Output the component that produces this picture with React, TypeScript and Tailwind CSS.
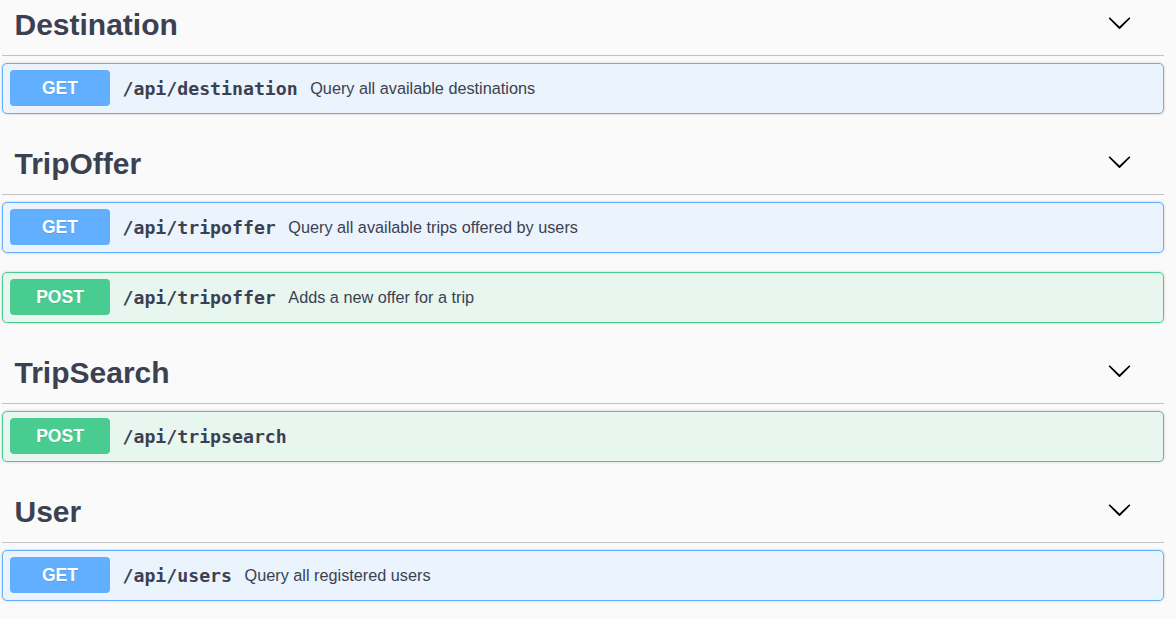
import React from "react";

type Op = { method: "GET" | "POST"; path: string; summary?: string };
type Tag = { name: string; ops: Op[] };

const tags: Tag[] = [
  { name: "Destination", ops: [{ method: "GET", path: "/api/destination", summary: "Query all available destinations" }] },
  {
    name: "TripOffer",
    ops: [
      { method: "GET", path: "/api/tripoffer", summary: "Query all available trips offered by users" },
      { method: "POST", path: "/api/tripoffer", summary: "Adds a new offer for a trip" },
    ],
  },
  { name: "TripSearch", ops: [{ method: "POST", path: "/api/tripsearch" }] },
  { name: "User", ops: [{ method: "GET", path: "/api/users", summary: "Query all registered users" }] },
];

function Chevron() {
  return (
    <svg width="25" height="25" viewBox="0 0 20 20" className="mb-[5px] shrink-0" aria-hidden="true">
      <path
        fill="#000"
        d="M17.418 6.109c.272-.268.709-.268.979 0s.271.701 0 .969l-7.908 7.83c-.27.268-.707.268-.979 0l-7.908-7.83c-.27-.268-.27-.701 0-.969.271-.268.709-.268.979 0L10 13.25l7.418-7.141z"
      />
    </svg>
  );
}

function Operation({ op }: { op: Op }) {
  const isGet = op.method === "GET";
  return (
    <div
      className={
        isGet
          ? "flex items-center h-[50.5px] px-[7px] rounded-[5px] border border-[#61affe] bg-[#ebf3fc] shadow-[0_0_3px_rgba(0,0,0,0.19)]"
          : "flex items-center h-[50.5px] px-[7px] rounded-[5px] border border-[#49cc90] bg-[#e8f6f0] shadow-[0_0_3px_rgba(0,0,0,0.19)]"
      }
    >
      <span
        className={
          isGet
            ? "flex items-center justify-center w-[100px] h-[36px] rounded-[4px] bg-[#61affe] text-white text-[17.5px] font-bold text-shadow-[0_1px_0_rgba(0,0,0,0.1)]"
            : "flex items-center justify-center w-[100px] h-[36px] rounded-[4px] bg-[#49cc90] text-white text-[17.5px] font-bold text-shadow-[0_1px_0_rgba(0,0,0,0.1)]"
        }
      >
        {op.method}
      </span>
      <span className="px-[12.5px] font-['DejaVu_Sans_Mono',monospace] font-bold text-[18.2px] text-[#3b4151]">
        {op.path}
      </span>
      {op.summary && <span className="text-[16.25px] text-[#3b4151]">{op.summary}</span>}
    </div>
  );
}

export default function App() {
  return (
    <div className="min-h-screen bg-[#fafafa] font-['Liberation_Sans',Arial,sans-serif]">
      <div className="ml-[2px] w-[1162px] flex flex-col">
        {tags.map((tag) => (
          <section key={tag.name} className="flex flex-col pb-[25.5px]">
            {/* tag header */}
            <div className="flex items-center justify-between h-[56px] pb-[6px] pl-[12.5px] pr-[32px] border-b border-[#3b4151]/30">
              <h4 className="text-[30px] font-bold text-[#3b4151] leading-none">{tag.name}</h4>
              <Chevron />
            </div>
            <div className="flex flex-col gap-[19.5px] pt-[7px]">
              {tag.ops.map((op) => (
                <Operation key={op.method + op.path} op={op} />
              ))}
            </div>
          </section>
        ))}
      </div>
    </div>
  );
}
